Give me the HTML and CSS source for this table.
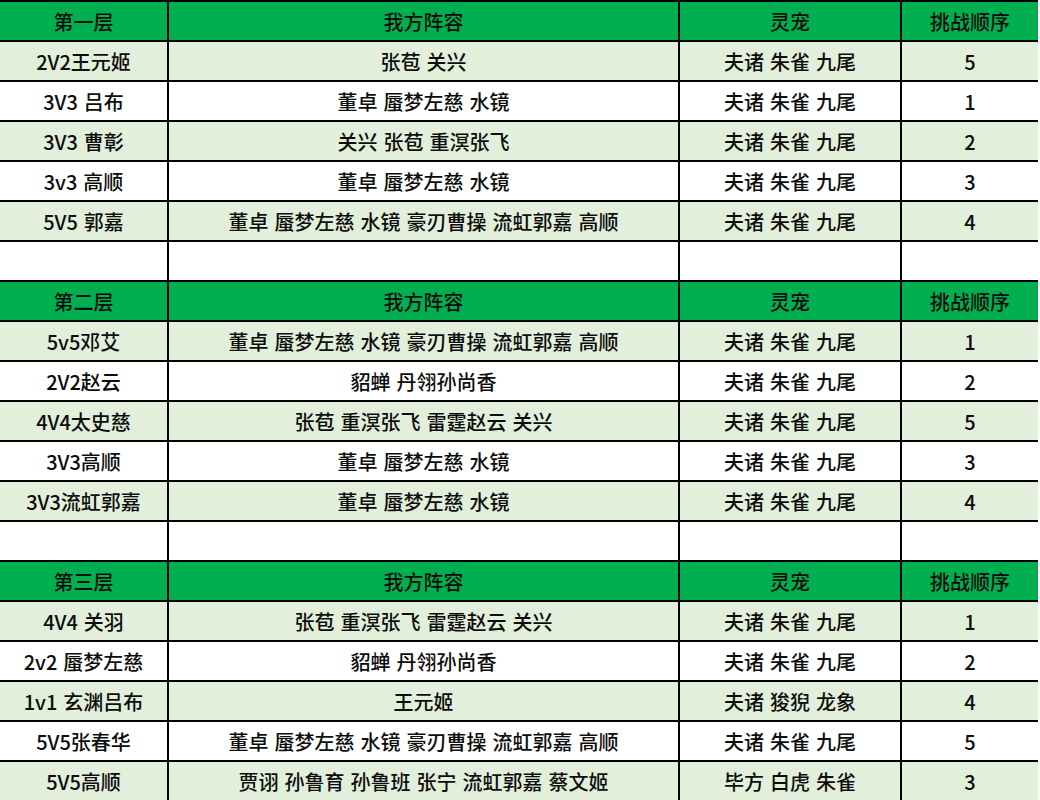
FILE: index.html
```html
<!DOCTYPE html>
<html lang="zh-CN">
<head>
<meta charset="utf-8">
<title>挑战顺序</title>
<link rel="stylesheet" href="styles.css">
</head>
<body>
<div class="sheet">
  <div class="cell hd">第一层</div><div class="cell hd">我方阵容</div><div class="cell hd">灵宠</div><div class="cell hd">挑战顺序</div>
  <div class="cell alt">2V2王元姬</div><div class="cell alt">张苞 关兴</div><div class="cell alt">夫诸 朱雀 九尾</div><div class="cell alt">5</div>
  <div class="cell">3V3 吕布</div><div class="cell">董卓 蜃梦左慈 水镜</div><div class="cell">夫诸 朱雀 九尾</div><div class="cell">1</div>
  <div class="cell alt">3V3 曹彰</div><div class="cell alt">关兴 张苞 重溟张飞</div><div class="cell alt">夫诸 朱雀 九尾</div><div class="cell alt">2</div>
  <div class="cell">3v3 高顺</div><div class="cell">董卓 蜃梦左慈 水镜</div><div class="cell">夫诸 朱雀 九尾</div><div class="cell">3</div>
  <div class="cell alt">5V5 郭嘉</div><div class="cell alt">董卓 蜃梦左慈 水镜 豪刃曹操 流虹郭嘉 高顺</div><div class="cell alt">夫诸 朱雀 九尾</div><div class="cell alt">4</div>
  <div class="cell"></div><div class="cell"></div><div class="cell"></div><div class="cell"></div>

  <div class="cell hd">第二层</div><div class="cell hd">我方阵容</div><div class="cell hd">灵宠</div><div class="cell hd">挑战顺序</div>
  <div class="cell alt">5v5邓艾</div><div class="cell alt">董卓 蜃梦左慈 水镜 豪刃曹操 流虹郭嘉 高顺</div><div class="cell alt">夫诸 朱雀 九尾</div><div class="cell alt">1</div>
  <div class="cell">2V2赵云</div><div class="cell">貂蝉 丹翎孙尚香</div><div class="cell">夫诸 朱雀 九尾</div><div class="cell">2</div>
  <div class="cell alt">4V4太史慈</div><div class="cell alt">张苞 重溟张飞 雷霆赵云 关兴</div><div class="cell alt">夫诸 朱雀 九尾</div><div class="cell alt">5</div>
  <div class="cell">3V3高顺</div><div class="cell">董卓 蜃梦左慈 水镜</div><div class="cell">夫诸 朱雀 九尾</div><div class="cell">3</div>
  <div class="cell alt">3V3流虹郭嘉</div><div class="cell alt">董卓 蜃梦左慈 水镜</div><div class="cell alt">夫诸 朱雀 九尾</div><div class="cell alt">4</div>
  <div class="cell"></div><div class="cell"></div><div class="cell"></div><div class="cell"></div>

  <div class="cell hd">第三层</div><div class="cell hd">我方阵容</div><div class="cell hd">灵宠</div><div class="cell hd">挑战顺序</div>
  <div class="cell alt">4V4 关羽</div><div class="cell alt">张苞 重溟张飞 雷霆赵云 关兴</div><div class="cell alt">夫诸 朱雀 九尾</div><div class="cell alt">1</div>
  <div class="cell">2v2 蜃梦左慈</div><div class="cell">貂蝉 丹翎孙尚香</div><div class="cell">夫诸 朱雀 九尾</div><div class="cell">2</div>
  <div class="cell alt">1v1 玄渊吕布</div><div class="cell alt">王元姬</div><div class="cell alt">夫诸 狻猊 龙象</div><div class="cell alt">4</div>
  <div class="cell">5V5张春华</div><div class="cell">董卓 蜃梦左慈 水镜 豪刃曹操 流虹郭嘉 高顺</div><div class="cell">夫诸 朱雀 九尾</div><div class="cell">5</div>
  <div class="cell alt">5V5高顺</div><div class="cell alt">贾诩 孙鲁育 孙鲁班 张宁 流虹郭嘉 蔡文姬</div><div class="cell alt">毕方 白虎 朱雀</div><div class="cell alt">3</div>
</div>
</body>
</html>
```

FILE: styles.css
```css
html, body {
  margin: 0;
  padding: 0;
  background: #ffffff;
}

.sheet {
  width: 1038px;
  height: 798px;
  display: grid;
  grid-template-columns: 167px 509px 220px 136px;
  grid-auto-rows: 38px;
  gap: 2px;
  background: #000000;
  border-top: 2px solid #000000;
  font-family: "Noto Sans CJK SC", "Noto Sans", sans-serif;
  font-size: 20px;
  font-weight: 500;
  color: #0d0d0d;
  overflow: hidden;
}

.cell {
  background: #ffffff;
  display: flex;
  align-items: center;
  justify-content: center;
  white-space: nowrap;
  word-spacing: 1.5px;
  line-height: 1;
  padding-top: 1px;
}

.cell.hd {
  background: #00b050;
  color: #0d0d0d;
}

.cell.alt {
  background: #e2efda;
}
```
